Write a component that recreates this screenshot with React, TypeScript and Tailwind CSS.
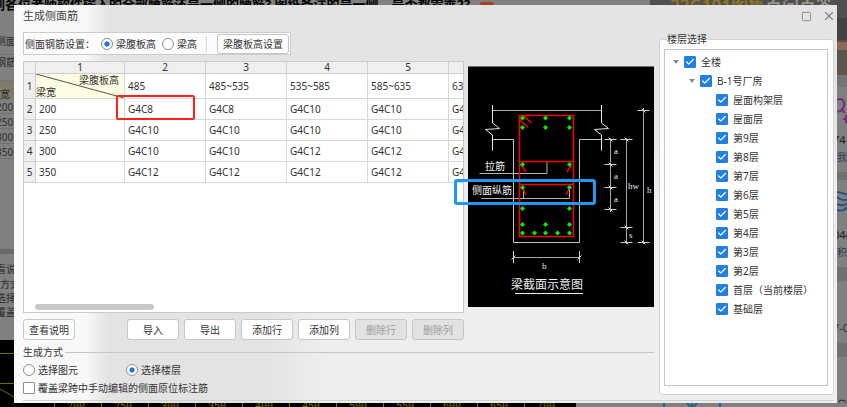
import { useState, type ReactNode } from 'react'
import { Check, Square, X } from 'lucide-react'

const COLUMNS = ['485', '485~535', '535~585', '585~635', '635~685']

const ROWS = [
  { width: '200', values: ['G4C8', 'G4C8', 'G4C10', 'G4C10', 'G4C10'] },
  { width: '250', values: ['G4C10', 'G4C10', 'G4C10', 'G4C10', 'G4C10'] },
  { width: '300', values: ['G4C10', 'G4C10', 'G4C12', 'G4C12', 'G4C12'] },
  { width: '350', values: ['G4C12', 'G4C12', 'G4C12', 'G4C12', 'G4C12'] },
]

const FLOORS = [
  '屋面构架层', '屋面层', '第9层', '第8层', '第7层', '第6层', '第5层',
  '第4层', '第3层', '第2层', '首层（当前楼层）', '基础层',
]

const BACKDROP_WIDTHS = ['200', '250', '300', '350', '400', '450', '500', '550', '600', '650', '700']

function Radio({ name, label, checked, onChange, className }: {
  name: string
  label: string
  checked: boolean
  onChange: () => void
  className?: string
}) {
  return (
    <label className={`flex shrink-0 items-center gap-[3px] ${className ?? ''}`}>
      <input
        type="radio"
        name={name}
        checked={checked}
        onChange={onChange}
        className="size-3 shrink-0 appearance-none rounded-full border border-[#8f8f8f] bg-white checked:bg-[radial-gradient(circle_closest-side,#1f78e0_45%,#ffffff_60%)]"
      />
      <span>{label}</span>
    </label>
  )
}

function TreeItem({ label, indent, open }: { label: string; indent: string; open?: boolean }) {
  const [checked, setChecked] = useState(true)
  return (
    <li className={`flex h-[19px] items-center ${indent}`}>
      <svg viewBox="0 0 6 4" className={`mr-[5px] h-1 w-[6px] ${open ? '' : 'invisible'}`} aria-hidden="true">
        <path d="M0 0h6L3 4z" fill="#8a8a8a" />
      </svg>
      <label className="flex items-center gap-[5px] whitespace-nowrap">
        <span className="grid size-3 place-items-center">
          <input
            type="checkbox"
            checked={checked}
            onChange={e => setChecked(e.target.checked)}
            className="col-start-1 row-start-1 size-3 appearance-none rounded-[1px] border border-[#999] bg-white checked:border-[#2280e3] checked:bg-[#2280e3]"
          />
          {checked && <Check className="pointer-events-none col-start-1 row-start-1 text-white" size={10} strokeWidth={3} />}
        </span>
        <span>{label}</span>
      </label>
    </li>
  )
}

function ActionButton({ children, disabled, className }: { children: ReactNode; disabled?: boolean; className?: string }) {
  return (
    <button
      type="button"
      disabled={disabled}
      className={`h-[21px] w-[52px] shrink-0 rounded-[3px] border border-[#c6c6c6] bg-white disabled:bg-[#e2e2e2] disabled:text-[#9c9c9c] ${className ?? ''}`}
    >
      {children}
    </button>
  )
}

function BreakLine({ x }: { x: number }) {
  return <path d={`M${x} 39V57L${x + 7} 62.5L${x - 7} 63.5L${x} 69V84.5`} stroke="#e8e8e8" fill="none" />
}

function Tick({ x, y }: { x: number; y: number }) {
  return <path d={`M${x - 6} ${y}h12M${x - 2} ${y - 2}l4 4`} stroke="#d0d0d0" />
}

const BARS = [
  [54.5, 52], [77.5, 52], [101.5, 52],
  [54.5, 61.5], [77.5, 61.5], [101.5, 61.5],
  [54.5, 98.5], [101.5, 98.5],
  [54.5, 121.5], [101.5, 121.5],
  [54.5, 142.5], [101.5, 142.5],
  [54.5, 158.5], [77.5, 158.5], [101.5, 158.5],
  [54.5, 167], [66.5, 167], [77.5, 167], [89.5, 167], [101.5, 167],
]

function BeamSection() {
  return (
    <svg viewBox="0 0 186 241" className="mt-[5px] h-[241px] w-[186px] shrink-0 bg-black" role="img" aria-label="梁截面示意图">
      <path d="M0 .5h186" stroke="#6b7070" />
      <path d="M24.5 44.5h109" stroke="#a8a8a8" />
      <BreakLine x={24.5} />
      <BreakLine x={133.5} />
      <path d="M24.5 73.5h21v103h66v-103h22" stroke="#c4c4c4" fill="none" />
      <path d="M11.5 107.5H79V96M13.5 132.5h88V122M55.5 122v10" stroke="#b4b4b4" fill="none" />
      <g stroke="#f40000" strokeWidth="1.6" fill="none">
        <path d="M51.5 49.5h54v121h-54zM51.5 95.5h54M51.5 118.5h54" />
        <path d="M56 50l7.5 7M52 54l8 7.5M54 100l4 6M103 100l-4 6M54.5 122l3.5 7M101.5 122l-3.5 7" />
      </g>
      {BARS.map(([x, y]) => (
        <path key={`${x}-${y}`} d={`M${x - 2.5} ${y}l2.500-2.500 2.500 2.500-2.500 2.500z`} fill="#00f400" />
      ))}
      <g stroke="#a8a8a8">
        <path d="M142.5 72v74M158.5 72v106M175.5 42v136M45.5 191.5h66" />
        <path d="M45.5 185v12M111.5 185v12M43.5 193.5l4-4M109.5 193.5l4-4" stroke="#d8d8d8" />
      </g>
      {[73.5, 98.5, 121.5, 143.5].map(y => <Tick key={y} x={142.5} y={y} />)}
      {[73.5, 161.5, 176.5].map(y => <Tick key={y} x={158.5} y={y} />)}
      {[44.5, 176.5].map(y => <Tick key={y} x={175.5} y={y} />)}
      <g fill="#ececec" fontSize="9" fontFamily="'Liberation Serif', serif">
        <text x="146" y="88">a</text>
        <text x="146" y="113">a</text>
        <text x="146" y="136">a</text>
        <text x="160" y="123">hw</text>
        <text x="179" y="127">h</text>
        <text x="161" y="172">s</text>
        <text x="74" y="203">b</text>
      </g>
      <g fill="#f0f0f0" fontSize="10">
        <text x="17" y="104">拉筋</text>
        <text x="4" y="128">侧面纵筋</text>
        <text x="43" y="223" fontSize="12">梁截面示意图</text>
      </g>
      <path d="M47 227.5h68" stroke="#f0f0f0" />
    </svg>
  )
}

function BeamTable() {
  const cell = 'border-r border-b border-[#d8d8d8] px-[3px] font-normal text-left'
  const head = 'border-r border-b border-[#cfcfcf] bg-[#efefef] font-normal text-center'
  return (
    <table className="w-[506px] table-fixed border-separate border-spacing-0">
      <colgroup>
        <col className="w-3" />
        <col className="w-[89px]" />
        {COLUMNS.map(c => <col key={c} className="w-[81px]" />)}
      </colgroup>
      <thead>
        <tr className="h-3 leading-[11px]">
          <th className={head} />
          {['1', '2', '3', '4', '5', '6'].map(n => <th key={n} className={head}>{n}</th>)}
        </tr>
      </thead>
      <tbody>
        <tr className="h-[25px]">
          <th className={head}>1</th>
          <th className="relative border-r border-b border-[#d8d8d8] bg-[#fdfde4] font-normal leading-3">
            <svg className="absolute inset-0 size-full" viewBox="0 0 88 24" preserveAspectRatio="none" aria-hidden="true">
              <path d="M0 0L88 24" stroke="#55554c" />
            </svg>
            <div className="pr-[5px] text-right">梁腹板高</div>
            <div className="text-left">梁宽</div>
          </th>
          {COLUMNS.map(c => <th key={c} className={cell}>{c}</th>)}
        </tr>
        {ROWS.map((row, i) => (
          <tr key={row.width} className="h-[21px]">
            <th className={head}>{i + 2}</th>
            <td className={cell}>{row.width}</td>
            {row.values.map((v, j) => <td key={j} className={cell}>{v}</td>)}
          </tr>
        ))}
      </tbody>
    </table>
  )
}

// Dimmed page and drawing behind the dialog
function Backdrop() {
  return (
    <div className="absolute inset-0 overflow-hidden bg-[#808080] text-[10px] text-[#2c2c2c]" aria-hidden="true">
      <div className="absolute -top-1 -left-2 flex h-4 items-center gap-2.5 text-[13px] font-bold whitespace-nowrap text-black">
        <span>到各位老师软件输入的全部腰筋还是一侧的腰筋? 图纸备注的是一侧，是否都需乘2?</span>
        <span className="mt-2 h-3 w-[14px] rounded-[2px] bg-[#a8401a]" />
      </div>
      <div className="absolute top-0 right-0 h-[75px] w-[197px] overflow-hidden bg-linear-to-b from-[#4f4f4f] to-[#5e554c]">
        <div className="-mt-1 ml-5 text-[17px] leading-5 font-bold whitespace-nowrap text-[#9a9484]">
          <span className="text-[#8c7526]">22G101图集</span>百问百答
        </div>
        <div className="mt-0.5 ml-auto h-[22px] w-2.5 bg-[#454341]" />
        <div className="mt-0.5 ml-auto h-2 w-2.5 bg-[#8b6a58]" />
      </div>
      <div className="absolute top-0 -left-1 flex h-full w-[18px] flex-col whitespace-nowrap">
        <div className="mt-[34px] h-5">侧面</div>
        <div className="h-[27px] border-y border-[#747474]">钢筋</div>
        <div className="h-[18px] bg-[#7d7c6a] pl-1 leading-[26px]">宽</div>
        <div className="h-[15px] border-b border-[#707070] leading-4">200</div>
        <div className="h-[15px] border-b border-[#707070] leading-4">250</div>
        <div className="h-[15px] border-b border-[#707070] leading-4">300</div>
        <div className="h-[15px] border-b border-[#707070] leading-4">350</div>
        <div className="mt-[90px] h-[5px] bg-[#686868]" />
        <div className="mt-2 h-[15px]">看说明</div>
        <div className="h-[14px] pl-1">方式</div>
        <div className="h-[14px]">选择图</div>
        <div className="h-[14px]">覆盖梁</div>
        <svg className="mt-auto h-[67px] w-full bg-black" viewBox="0 0 18 67">
          <path d="M0 13.5h18M0 43.5h18M4 49l14 8" stroke="#6f6f00" fill="none" />
        </svg>
      </div>
      <div className="absolute bottom-0 left-0 flex h-[5px] w-[576px] overflow-hidden bg-black pl-[54px] font-mono text-[10px] leading-[10px] text-[#77770e]">
        {BACKDROP_WIDTHS.map(n => (
          <span key={n} className="w-[47px] shrink-0 border-l border-[#77770e] pl-3">{n}</span>
        ))}
      </div>
      <div className="absolute bottom-0 left-[663px] h-[6px] w-[58px] border-x-2 border-[#16688c]">
        <svg viewBox="0 0 54 6" className="h-[6px] w-[54px]">
          <path d="M20 0l6 6M34 0l-6 6M27 0v6" stroke="#16688c" strokeWidth="2" />
        </svg>
      </div>
      <div className="absolute top-[75px] right-0 flex h-[328px] w-2.5 flex-col overflow-hidden whitespace-nowrap">
        <div className="h-3 shrink-0 bg-[#747474]" />
        <svg viewBox="0 0 10 38" className="mt-2 h-[38px] w-2.5 shrink-0" fill="none" stroke="#74307c" strokeWidth="2">
          <path d="M0 5C5 2 8 6 7 11C6 16 2 17 0 16M4 14l4 4M6 24h4M9 20v8" />
        </svg>
        <div className="-ml-1 text-[11px] text-[#1c1c1c]">74</div>
        <div className="mt-[3px] text-[#333a52]">我</div>
        <div className="mt-2 h-2 shrink-0 bg-[#717171]" />
        <svg viewBox="0 0 10 26" className="mt-2.5 h-[26px] w-2.5 shrink-0" fill="none" stroke="#284d85" strokeWidth="2">
          <path d="M0 2Q7 3 10 5M0 7Q7 12 10 9M0 14Q7 17 10 13M0 20Q7 22 10 17" />
        </svg>
        <div className="mt-3 -ml-1 text-[11px] text-[#1c1c1c]">044</div>
        <div className="mt-[3px] text-[#333a52]">积</div>
        <div className="mt-2 h-3.5 shrink-0 bg-[#717171]" />
        <div className="mt-10 -ml-1 text-[11px] text-[#2f2f2f]">7-0</div>
        <div className="mt-2 h-3.5 shrink-0 bg-[#717171]" />
        <div className="mt-10 text-[#2f2f2f]">自等</div>
      </div>
    </div>
  )
}

export default function App() {
  const [setting, setSetting] = useState('web')
  const [mode, setMode] = useState('floor')

  return (
    <div className="relative overflow-hidden pt-[5px] pr-2.5 pb-1 pl-[14px] font-['Noto_Sans','Noto_Sans_CJK_SC',sans-serif] text-[10px] leading-[14px] text-[#333]">
      <Backdrop />
      <section
        aria-labelledby="dialog-title"
        className="relative bg-[linear-gradient(to_right,#fafafa_0,#f8f8f8_72px,rgba(228,228,228,0)_94px),linear-gradient(to_bottom,#e4e4e4_100px,rgba(228,228,228,0)_180px),linear-gradient(to_right,#e3e3e3_250px,#efeeee_310px)] pr-[3px] pb-0.5 pl-[9px]"
      >
        <header className="flex h-[22px] items-center">
          <h1 id="dialog-title" className="flex-1 text-[11px] text-[#444]">生成侧面筋</h1>
          <button type="button" aria-label="最大化" className="mr-2.5"><Square size={11} strokeWidth={2} color="#858585" /></button>
          <button type="button" aria-label="关闭" className="-mr-0.5"><X size={14} strokeWidth={2} color="#858585" /></button>
        </header>

        <div className="mt-[5px] flex gap-[5px]">
          <div className="min-w-0 flex-1">
            <div className="flex h-[23px] w-[268px] items-center border border-[#c9cdd2] bg-[#fcfcfc] pl-px whitespace-nowrap">
              <span className="w-[76px] shrink-0">侧面钢筋设置：</span>
              <Radio name="setting" label="梁腹板高" checked={setting === 'web'} onChange={() => setSetting('web')} className="w-[61px]" />
              <Radio name="setting" label="梁高" checked={setting === 'height'} onChange={() => setSetting('height')} className="w-11" />
              <span className="mr-2.5 h-4 w-px bg-[#d8d8d8]" />
              <button type="button" className="h-5 w-[72px] rounded-[3px] border border-[#c6c6c6] bg-white">梁腹板高设置</button>
            </div>

            <div className="relative mt-[6px] flex gap-1">
              <div className="flex h-[252px] min-w-0 flex-1 flex-col justify-between overflow-hidden border border-[#c8cacc] bg-white">
                <BeamTable />
                <div className="mb-0.5 ml-[11px] h-[6px] w-[119px] rounded-full bg-[#c8c8c8]" />
              </div>
              <BeamSection />
              <div className="pointer-events-none absolute top-[34px] left-[93px] h-[25px] w-[79px] rounded-[2px] border-2 border-[#ff2415]" />
              <div className="pointer-events-none absolute top-[118px] left-[431px] h-[26px] w-[142px] rounded-[3px] border-3 border-[#1e98f4]" />
            </div>

            <div className="mt-[6px] flex gap-[5px]">
              <ActionButton className="mr-[47px]">查看说明</ActionButton>
              <ActionButton>导入</ActionButton>
              <ActionButton>导出</ActionButton>
              <ActionButton>添加行</ActionButton>
              <ActionButton>添加列</ActionButton>
              <ActionButton disabled>删除行</ActionButton>
              <ActionButton disabled>删除列</ActionButton>
            </div>

            <div role="radiogroup" aria-labelledby="mode-title" className="mt-[5px]">
              <div className="flex items-center gap-0.5">
                <span id="mode-title">生成方式</span>
                <span className="h-px flex-1 bg-[#c6c6c6]" />
              </div>
              <div className="mt-1 flex">
                <Radio name="mode" label="选择图元" checked={mode === 'element'} onChange={() => setMode('element')} className="w-[103px]" />
                <Radio name="mode" label="选择楼层" checked={mode === 'floor'} onChange={() => setMode('floor')} />
              </div>
              <label className="mt-1 flex items-center gap-[3px]">
                <input type="checkbox" className="size-3 appearance-none rounded-[1px] border border-[#8f8f8f] bg-white checked:bg-[#2280e3]" />
                <span>覆盖梁跨中手动编辑的侧面原位标注筋</span>
              </label>
            </div>
          </div>

          <fieldset className="flex w-[175px] shrink-0 flex-col rounded-[3px] border border-[#d2d2d2] bg-white px-1 pb-2">
            <legend className="ml-[3px]">楼层选择</legend>
            <ul className="mr-px mt-[3px] flex-1 border border-[#c6c6c6] pt-[2px]">
              <TreeItem label="全楼" indent="pl-2" open />
              <TreeItem label="B-1号厂房" indent="pl-6" open />
              {FLOORS.map(f => <TreeItem key={f} label={f} indent="pl-10" />)}
            </ul>
          </fieldset>
        </div>
        <div className="mt-[5px] h-px bg-[#d2d2d2]" />
      </section>
    </div>
  )
}
